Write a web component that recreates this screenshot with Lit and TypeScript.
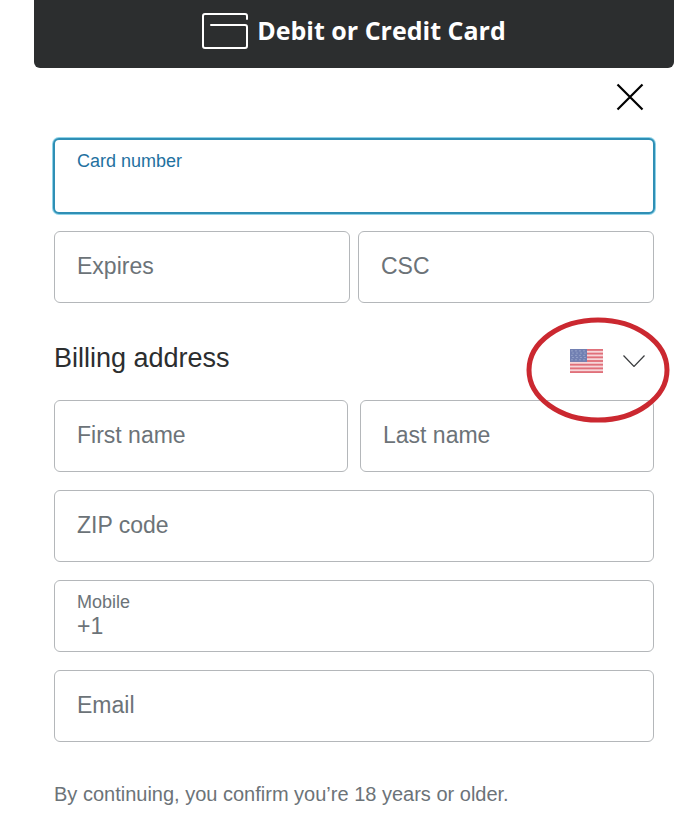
import { LitElement, html, svg, css } from "lit";
import { customElement, property } from "lit/decorators.js";

@customElement("form-field")
class FormField extends LitElement {
  @property() label = "";
  @property() value = "";
  @property() type = "text";
  @property({ type: Boolean, reflect: true }) raised = false;
  @property({ type: Boolean, reflect: true }) active = false;

  static styles = css`
    :host {
      display: block;
      min-width: 0;
    }
    .box {
      display: grid;
      box-sizing: border-box;
      height: 72px;
      border: 1px solid #b4b7ba;
      border-radius: 6px;
      background: #fff;
      color: #6c7378;
    }
    label,
    input {
      grid-area: 1 / 1;
      box-sizing: border-box;
      padding: 0 22px;
      font: 23px/28px "Liberation Sans", Arial, sans-serif;
    }
    label {
      align-self: center;
      padding-bottom: 2px;
      pointer-events: none;
    }
    input {
      width: 100%;
      min-width: 0;
      border: 0;
      outline: 0;
      background: transparent;
      color: inherit;
    }
    :host([raised]) label {
      align-self: start;
      padding-top: 10px;
      font-size: 18px;
      line-height: 22px;
    }
    :host([raised]) input {
      padding-top: 20px;
    }
    :host([active]) .box {
      height: 76px;
      margin: -1px;
      border: 2px solid #2f8fb5;
      box-shadow: 0 0 0 1px #8fd3e8;
      color: #1f719f;
    }
  `;

  render() {
    return html`<div class="box">
      <input id="control" type=${this.type} .value=${this.value} />
      <label for="control">${this.label}</label>
    </div>`;
  }
}

@customElement("country-picker")
class CountryPicker extends LitElement {
  static styles = css`
    :host {
      position: relative;
      display: flex;
      align-items: center;
      gap: 20px;
      padding-right: 9px;
    }
    svg {
      display: block;
    }
    select {
      position: absolute;
      inset: 0;
      width: 100%;
      opacity: 0;
    }
    .ring {
      position: absolute;
      right: -16px;
      top: -32px;
      pointer-events: none;
    }
  `;

  render() {
    const stripes = [0, 1, 2, 3, 4, 5, 6].map(
      (i) => svg`<rect y=${i * 4} width="33" height="2" fill="#e0707a" />`
    );
    const stars = [0, 1, 2, 3, 4].map((row) =>
      [0, 1, 2, 3].map(
        (col) =>
          svg`<circle cx=${2 + col * 4 + (row % 2)} cy=${2 + row * 2.4} r="0.6" fill="#b9c1de" />`
      )
    );
    return html`
      <svg width="33" height="24" viewBox="0 0 33 26" preserveAspectRatio="none" aria-hidden="true">
        <rect width="33" height="26" fill="#f6d6d9" />
        ${stripes}
        <rect width="17" height="14" fill="#7280b2" />
        ${stars}
      </svg>
      <svg width="22" height="12" viewBox="0 0 22 12" fill="none" stroke="#3a3c3e" stroke-width="1.2" aria-hidden="true">
        <path d="M0.5 0.5 11 11.5 21.5 0.5" />
      </svg>
      <select aria-label="Country">
        <option>United States</option>
      </select>
      <svg class="ring" width="144" height="106" fill="none" stroke="#cb2830" stroke-width="5" aria-hidden="true">
        <ellipse cx="72" cy="53" rx="69" ry="50" />
      </svg>
    `;
  }
}

@customElement("app-root")
class AppRoot extends LitElement {
  static styles = css`
    :host {
      display: block;
      padding: 0 15px 0 34px;
      background: #fff;
      font-family: "Liberation Sans", Arial, sans-serif;
    }
    .pay {
      display: flex;
      align-items: center;
      justify-content: center;
      gap: 9px;
      box-sizing: border-box;
      width: 100%;
      height: 68px;
      padding: 0 0 6px;
      border: 0;
      border-radius: 0 0 6px 6px;
      background: #2c2e2f;
      color: #fff;
      font: 700 25px/36px "Open Sans", "Noto Sans", sans-serif;
    }
    .pay span {
      padding-bottom: 2px;
    }
    form {
      display: flex;
      flex-direction: column;
      padding: 9px 20px 10px;
    }
    .close {
      display: grid;
      place-items: center;
      align-self: flex-end;
      width: 40px;
      height: 40px;
      margin: 0 4px 22px 0;
      padding: 0;
      border: 0;
      background: none;
    }
    .fields {
      display: grid;
      gap: 18px;
    }
    .row {
      display: grid;
      grid-template-columns: 1fr 1fr;
      gap: 8px;
    }
    .names {
      gap: 12px;
    }
    .billing {
      display: flex;
      align-items: center;
      justify-content: space-between;
      padding: 42px 0 24px;
    }
    h2 {
      margin: 0;
      padding-bottom: 4px;
      color: #2c2e2f;
      font-size: 27px;
      font-weight: 400;
      line-height: 27px;
    }
    .note {
      margin: 40px 0 0;
      color: #6c7378;
      font-size: 20px;
      line-height: 24px;
    }
  `;

  render() {
    return html`
      <button class="pay" type="button">
        <svg width="46" height="36" viewBox="0 0 46 36" fill="none" stroke="#fff" stroke-width="2" stroke-linecap="round" aria-hidden="true">
          <path d="M45 6V3Q45 1 43 1H3Q1 1 1 3V33Q1 35 3 35H43Q45 35 45 33V14Q45 12 43 12H9" />
        </svg>
        <span>Debit or Credit Card</span>
      </button>
      <form>
        <button class="close" type="button" aria-label="Close">
          <svg width="28" height="28" viewBox="0 0 28 28" stroke="#000" stroke-width="2.2" aria-hidden="true">
            <path d="M1.5 1.5 26.5 26.5M26.5 1.5 1.5 26.5" />
          </svg>
        </button>
        <div class="fields">
          <form-field label="Card number" raised active></form-field>
          <div class="row">
            <form-field label="Expires"></form-field>
            <form-field label="CSC"></form-field>
          </div>
        </div>
        <div class="billing">
          <h2>Billing address</h2>
          <country-picker></country-picker>
        </div>
        <div class="fields">
          <div class="row names">
            <form-field label="First name"></form-field>
            <form-field label="Last name"></form-field>
          </div>
          <form-field label="ZIP code"></form-field>
          <form-field label="Mobile" type="tel" value="+1" raised></form-field>
          <form-field label="Email" type="email"></form-field>
        </div>
        <p class="note">By continuing, you confirm you’re 18 years or older.</p>
      </form>
    `;
  }
}
